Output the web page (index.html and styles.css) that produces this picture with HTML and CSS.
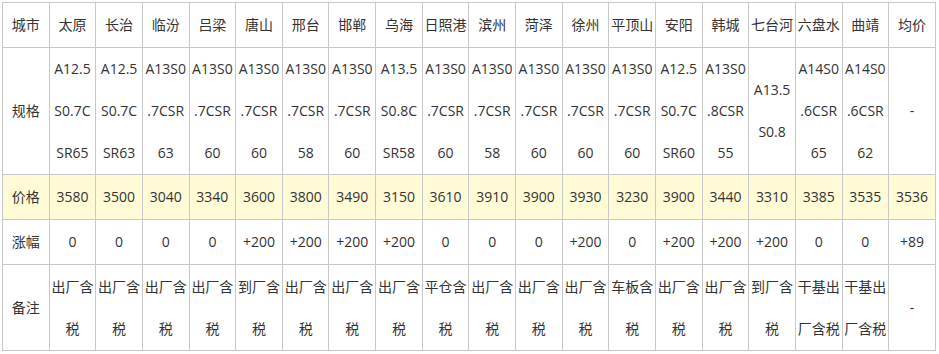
FILE: index.html
```html
<!DOCTYPE html>
<html lang="zh-CN">
<head>
<meta charset="utf-8">
<title>价格表</title>
<link rel="stylesheet" href="styles.css">
</head>
<body>
<table class="price-table">
  <tr class="row-head">
    <td>城市</td><td>太原</td><td>长治</td><td>临汾</td><td>吕梁</td><td>唐山</td><td>邢台</td><td>邯郸</td><td>乌海</td><td>日照港</td><td>滨州</td><td>菏泽</td><td>徐州</td><td>平顶山</td><td>安阳</td><td>韩城</td><td>七台河</td><td>六盘水</td><td>曲靖</td><td>均价</td>
  </tr>
  <tr class="row-spec">
    <td>规格</td>
    <td>A12.5<br>S0.7C<br>SR65</td>
    <td>A12.5<br>S0.7C<br>SR63</td>
    <td>A13S0<br>.7CSR<br>63</td>
    <td>A13S0<br>.7CSR<br>60</td>
    <td>A13S0<br>.7CSR<br>60</td>
    <td>A13S0<br>.7CSR<br>58</td>
    <td>A13S0<br>.7CSR<br>60</td>
    <td>A13.5<br>S0.8C<br>SR58</td>
    <td>A13S0<br>.7CSR<br>60</td>
    <td>A13S0<br>.7CSR<br>58</td>
    <td>A13S0<br>.7CSR<br>60</td>
    <td>A13S0<br>.7CSR<br>60</td>
    <td>A13S0<br>.7CSR<br>60</td>
    <td>A12.5<br>S0.7C<br>SR60</td>
    <td>A13S0<br>.8CSR<br>55</td>
    <td>A13.5<br>S0.8</td>
    <td>A14S0<br>.6CSR<br>65</td>
    <td>A14S0<br>.6CSR<br>62</td>
    <td>-</td>
  </tr>
  <tr class="row-price">
    <td>价格</td><td>3580</td><td>3500</td><td>3040</td><td>3340</td><td>3600</td><td>3800</td><td>3490</td><td>3150</td><td>3610</td><td>3910</td><td>3900</td><td>3930</td><td>3230</td><td>3900</td><td>3440</td><td>3310</td><td>3385</td><td>3535</td><td>3536</td>
  </tr>
  <tr class="row-change">
    <td>涨幅</td><td>0</td><td>0</td><td>0</td><td>0</td><td>+200</td><td>+200</td><td>+200</td><td>+200</td><td>0</td><td>0</td><td>0</td><td>+200</td><td>0</td><td>+200</td><td>+200</td><td>+200</td><td>0</td><td>0</td><td>+89</td>
  </tr>
  <tr class="row-note">
    <td>备注</td>
    <td>出厂含<br>税</td>
    <td>出厂含<br>税</td>
    <td>出厂含<br>税</td>
    <td>出厂含<br>税</td>
    <td>到厂含<br>税</td>
    <td>出厂含<br>税</td>
    <td>出厂含<br>税</td>
    <td>出厂含<br>税</td>
    <td>平仓含<br>税</td>
    <td>出厂含<br>税</td>
    <td>出厂含<br>税</td>
    <td>出厂含<br>税</td>
    <td>车板含<br>税</td>
    <td>出厂含<br>税</td>
    <td>出厂含<br>税</td>
    <td>到厂含<br>税</td>
    <td>干基出<br>厂含税</td>
    <td>干基出<br>厂含税</td>
    <td>-</td>
  </tr>
</table>
</body>
</html>
```
FILE: styles.css
```css
html, body {
  margin: 0;
  padding: 0;
  background: #ffffff;
}

body {
  padding: 2px 0 0 2px;
  font-family: "Open Sans", "Noto Sans CJK SC", sans-serif;
  font-size: 14px;
  color: #333333;
}

.price-table {
  border-collapse: collapse;
  table-layout: fixed;
  width: 934px;
}

.price-table td {
  border: 1px solid #c8c8c8;
  padding: 0;
  text-align: center;
  vertical-align: middle;
  white-space: nowrap;
  overflow: hidden;
  line-height: 42px;
}

.row-head td { height: 44px; }
.row-spec td { height: 126px; }
.row-price td { height: 44px; background: #fffbd7; }
.row-change td { height: 44px; }
.row-note td { height: 85px; }
```
